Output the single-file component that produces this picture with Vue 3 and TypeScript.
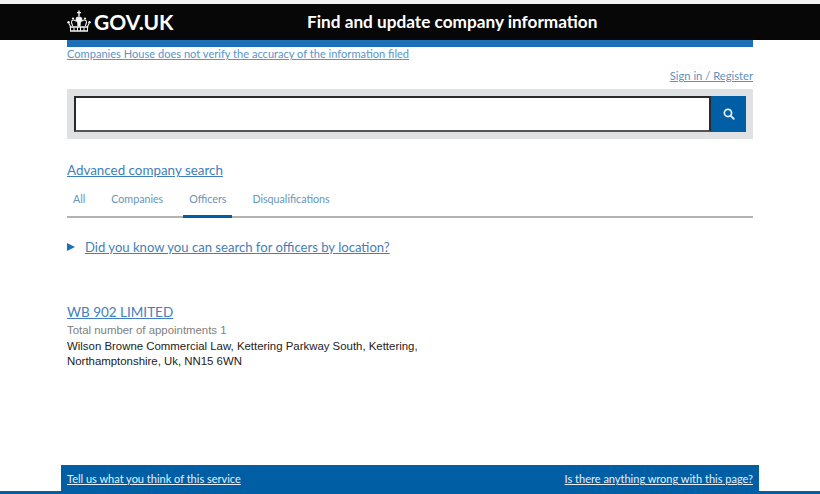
<script setup lang="ts">
const tabs: { label: string; active?: boolean }[] = [
  { label: 'All' },
  { label: 'Companies' },
  { label: 'Officers', active: true },
  { label: 'Disqualifications' },
]
</script>

<template>
  <div class="page">
    <header class="topbar">
      <div class="brand">
        <svg class="crown" viewBox="0 0 24 22" width="24" height="22" aria-hidden="true">
          <g fill="none" stroke="#f4f4f4" stroke-width="1.1">
            <path d="M12 0.5v6M10 2.6h4" stroke-width="1.4" />
            <path d="M12 7c-1.6 0-2.8.9-2.8 2.2 0 1.6 1.4 2.4 1.6 3.4l.2 3.4h2l.2-3.4c.2-1 1.6-1.8 1.6-3.4C14.800 7.900 13.600 7 12 7z" fill="#f4f4f4" />
            <path d="M9.500 11.500C8 9.700 5.600 9.500 4.700 11c-.8 1.400.1 3 1.100 5" />
            <path d="M14.500 11.500c1.500-1.800 3.900-2 4.800-.5.800 1.400-.1 3-1.100 5" />
            <path d="M1.800 13.300l2 3.700M22.200 13.300l-2 3.700" />
            <path d="M2.700 17h18.600M3 21h18" stroke-width="1.500" />
            <path d="M3.500 17v4M7 17v4M10.500 17v4M13.500 17v4M17 17v4M20.500 17v4" stroke-width="1" />
          </g>
          <g fill="#f4f4f4">
            <circle cx="1.500" cy="12.300" r="1.200" />
            <circle cx="22.500" cy="12.300" r="1.200" />
            <circle cx="6" cy="8.500" r="1.100" />
            <circle cx="18" cy="8.500" r="1.100" />
          </g>
        </svg>
        <span class="logotype">GOV.UK</span>
      </div>
      <div class="service">Find and update company information</div>
    </header>

    <main class="content">
      <div class="blue-rule"></div>
      <a class="notice" href="#">Companies House does not verify the accuracy of the information filed</a>
      <div class="signin-row"><a href="#">Sign in / Register</a></div>

      <form class="search" @submit.prevent>
        <input class="search-input" type="text" aria-label="Search" />
        <button class="search-btn" type="submit" aria-label="Search">
          <svg viewBox="0 0 14 14" width="12" height="12" aria-hidden="true">
            <circle cx="5.800" cy="5.800" r="4.200" fill="none" stroke="#e6eef6" stroke-width="2" />
            <path d="M8.800 8.800l3.800 3.800" stroke="#e6eef6" stroke-width="2.200" stroke-linecap="round" />
          </svg>
        </button>
      </form>

      <a class="advanced" href="#">Advanced company search</a>

      <nav class="tabs">
        <a v-for="t in tabs" :key="t.label" href="#" class="tab" :class="{ active: t.active }">{{ t.label }}</a>
      </nav>

      <div class="details">
        <span class="arrow"></span>
        <a href="#">Did you know you can search for officers by location?</a>
      </div>

      <section class="result">
        <a class="result-title" href="#">WB 902 LIMITED</a>
        <p class="meta">Total number of appointments 1</p>
        <p class="address">Wilson Browne Commercial Law, Kettering Parkway South, Kettering,<br />Northamptonshire, Uk, NN15 6WN</p>
      </section>
    </main>

    <footer class="footer">
      <div class="footer-inner">
        <a href="#">Tell us what you think of this service</a>
        <a href="#">Is there anything wrong with this page?</a>
      </div>
    </footer>
  </div>
</template>

<style>
html, body { margin: 0; background: #fff; }
</style>

<style scoped>
.page {
  width: 820px;
  height: 494px;
  overflow: hidden;
  display: flex;
  flex-direction: column;
  box-sizing: border-box;
  background: #fff;
  border-top: 4px solid #f2f2f2;
  font-family: Lato, "Noto Sans", sans-serif;
}
.topbar {
  height: 36px;
  box-sizing: border-box;
  padding: 0 0 2px 67px;
  background: #070707;
  display: flex;
  align-items: center;
  color: #fff;
  flex: none;
}
.brand { display: flex; align-items: center; width: 240px; }
.crown { margin-right: 3px; }
.logotype { font-size: 21px; font-weight: 700; }
.service { font-size: 17.200px; font-weight: 700; }
.content {
  width: 686px;
  margin-left: 67px;
  flex: 1;
  display: flex;
  flex-direction: column;
}
.blue-rule { height: 7px; background: #1d70b8; flex: none; }
a { color: #2b75b5; text-decoration: underline; }
.notice { font-size: 11.080px; line-height: 14px; color: #5a94c8; align-self: flex-start; }
.signin-row { text-align: right; font-size: 11.200px; line-height: 14px; margin-top: 8px; }
.signin-row a { color: #5f8fbd; }
.search {
  margin-top: 6px;
  height: 50px;
  box-sizing: border-box;
  background: #e0e1e2;
  padding: 7px 7px 7px;
  display: flex;
}
.search-input {
  flex: 1;
  min-width: 0;
  box-sizing: border-box;
  height: 36px;
  border: 2px solid #2a2a2a;
  border-bottom-color: #555;
  background: #fff;
  padding: 0;
  outline: none;
  border-radius: 0;
}
.search-btn {
  width: 35px;
  height: 36px;
  border: 0;
  padding: 0;
  background: #005ea5;
  display: flex;
  align-items: center;
  justify-content: center;
}
.advanced { font-size: 13.400px; line-height: 18px; margin-top: 22px; align-self: flex-start; color: #3f80bb; }
.tabs {
  display: flex;
  margin-top: 3px;
  height: 36px;
  box-sizing: border-box;
  border-bottom: 2px solid #b1b4b6;
}
.tab {
  font-size: 10.700px;
  line-height: 14px;
  padding: 10px 6px 0;
  margin-right: 14px;
  color: #6a93ba;
  text-decoration: none;
  height: 35px;
  box-sizing: border-box;
}
.tab.active { border-bottom: 3px solid #005ea5; height: 36px; }
.details {
  display: flex;
  align-items: center;
  margin-top: 20px;
  font-size: 13.100px;
  line-height: 18px;
}
.details a { color: #3f80bb; }
.arrow {
  width: 0;
  height: 0;
  border-left: 8px solid #1d70b8;
  border-top: 4.500px solid transparent;
  border-bottom: 4.500px solid transparent;
  margin-right: 10px;
}
.result { margin-top: 47px; display: flex; flex-direction: column; align-items: flex-start; }
.result-title { font-size: 13.500px; line-height: 18px; color: #3f80bb; }
.meta {
  margin: 1px 0 0;
  font: 11.400px/16px "Liberation Sans", Arial, sans-serif;
  color: #808080;
}
.address {
  margin: 1px 0 0;
  font: 11.420px/15px "Liberation Sans", Arial, sans-serif;
  color: #222;
}
.footer {
  flex: none;
  height: 29px;
  position: relative;
  border-bottom: 3px solid #005ea5;
  box-sizing: border-box;
}
.footer-inner {
  position: absolute;
  left: 61px;
  width: 698px;
  top: 0;
  height: 29px;
  box-sizing: border-box;
  background: #005ea5;
  padding: 6px 6px 0;
  display: flex;
  justify-content: space-between;
  font-size: 11px;
  line-height: 15px;
}
.footer-inner a { color: #e8f0f7; }
</style>
